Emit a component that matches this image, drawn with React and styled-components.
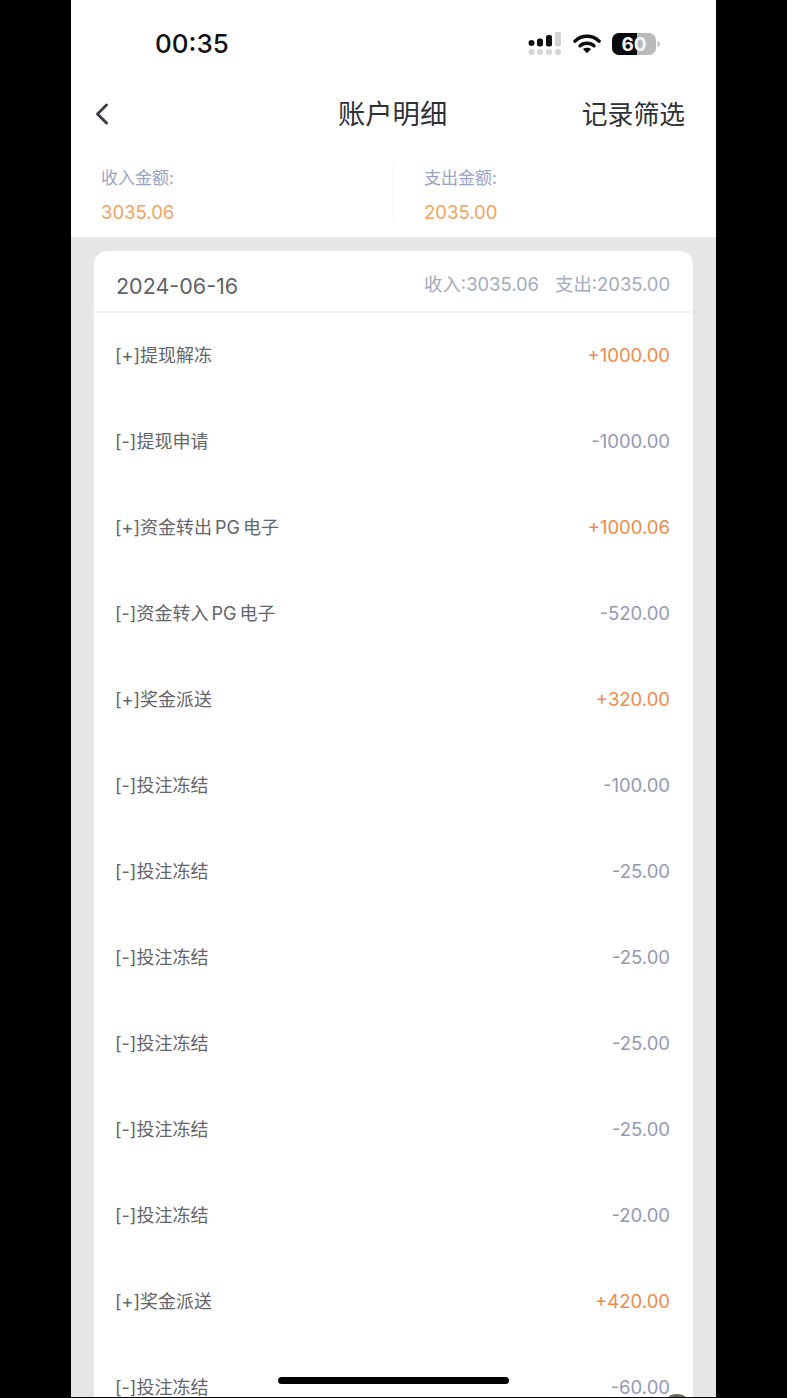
import React from "react";
import styled, { createGlobalStyle } from "styled-components";
import { ChevronLeft } from "lucide-react";

const GlobalStyle = createGlobalStyle`
    html, body {
        margin: 0;
        padding: 0;
        background: #000;
    }
    body {
        font-family: "Inter", "Noto Sans CJK SC", sans-serif;
    }
`;

const Stage = styled.div`
    width: 787px;
    height: 1398px;
    background: #000;
    overflow: hidden;
    display: flex;
    justify-content: flex-start;
    padding-left: 71px;
    box-sizing: border-box;
`;

const Phone = styled.div`
    position: relative;
    width: 645px;
    height: 1397px;
    background: #e6e6e6;
    overflow: hidden;
`;

const Top = styled.div`
    background: #fff;
    height: 237px;
    display: flex;
    flex-direction: column;
`;

const StatusBar = styled.div`
    height: 87px;
    display: flex;
    align-items: center;
    justify-content: space-between;
    padding: 0 56px 0 84px;
    box-sizing: border-box;
`;

const Clock = styled.div`
    font-size: 26px;
    font-weight: 500;
    color: #111;
`;

const StatusIcons = styled.div`
    display: flex;
    align-items: center;
    gap: 11px;
`;

const Nav = styled.div`
    height: 53px;
    display: flex;
    align-items: center;
    justify-content: space-between;
    padding: 0 31px 3px 13px;
    box-sizing: border-box;
    position: relative;
`;

const BackIcon = styled(ChevronLeft)`
    margin-top: 4px;
`;

const NavTitle = styled.div`
    position: absolute;
    left: 267px;
    font-size: 27.3px;
    color: #2f3136;
`;

const NavAction = styled.div`
    font-size: 25.8px;
    color: #2f3136;
`;

const Summary = styled.div`
    display: grid;
    grid-template-columns: 322px 1fr;
    margin-top: 22px;
    height: 60px;
`;

const SummaryCol = styled.div`
    display: flex;
    flex-direction: column;
    justify-content: space-between;
    padding-left: ${(p) => p.$inset}px;
    border-left: ${(p) => (p.$divided ? "1px solid #eceef0" : "none")};
`;

const SummaryLabel = styled.div`
    font-size: 17px;
    line-height: 30px;
    padding-top: 1px;
    color: #9aa3bf;
`;

const SummaryValue = styled.div`
    font-size: 18.5px;
    line-height: 24px;
    color: #f0a35e;
    margin-bottom: -2px;
`;

const Card = styled.div`
    margin: 14px 23px 0 23px;
    background: #fff;
    border-radius: 13px 13px 0 0;
`;

const CardHead = styled.div`
    height: 60px;
    border-bottom: 2px solid #f1f2f4;
    display: flex;
    align-items: center;
    justify-content: space-between;
    padding: 0 23px 0 22px;
`;

const DateText = styled.div`
    font-size: 21.5px;
    color: #5f6168;
    margin-top: 10px;
    line-height: 50px;
`;

const Totals = styled.div`
    display: flex;
    gap: 16px;
    font-size: 18.4px;
    color: #a3abc0;
    margin-top: 4px;
`;

const Row = styled.div`
    height: 86px;
    display: flex;
    align-items: center;
    justify-content: space-between;
    padding: 0 23px 0 21px;
`;

const RowName = styled.div`
    font-size: 18px;
    color: #63656b;
    margin-top: -4px;
    word-spacing: -2px;
`;

const Amount = styled.div`
    font-size: 18.5px;
    margin-top: -2px;
    color: ${(p) => (p.$plus ? "#f08a4b" : "#9499b3")};
`;

const HomeBar = styled.div`
    position: absolute;
    left: 207px;
    bottom: 13px;
    width: 231px;
    height: 7px;
    border-radius: 4px;
    background: #000;
`;

const CornerDot = styled.div`
    position: absolute;
    left: 597px;
    bottom: -6px;
    width: 18px;
    height: 9px;
    border-radius: 50%;
    background: #6f6a60;
`;

const SignalIcon = () => (
    <svg width="34" height="24" viewBox="0 0 34 24">
        <circle cx="3.5" cy="11" r="3" fill="#111" />
        <rect x="9" y="6.5" width="6" height="8" rx="2.5" fill="#111" />
        <rect x="18" y="3" width="6" height="11.5" rx="2" fill="#111" />
        <rect x="27" y="0" width="6" height="14.5" rx="1.5" fill="#d4d4d4" />
        <circle cx="3.5" cy="20" r="3" fill="#d4d4d4" />
        <circle cx="12" cy="20" r="3" fill="#d4d4d4" />
        <circle cx="21" cy="20" r="3" fill="#d4d4d4" />
        <circle cx="30" cy="20" r="3" fill="#d4d4d4" />
    </svg>
);

const WifiIcon = () => (
    <svg width="28" height="21" viewBox="0 0 30 22" fill="none">
        <path d="M2 8.5C9.5 1.5 20.5 1.5 28 8.5" stroke="#0c0c0c" strokeWidth="3.6" strokeLinecap="round" />
        <path d="M7.5 13.5C11.5 9.8 18.5 9.8 22.5 13.5" stroke="#0c0c0c" strokeWidth="3.6" strokeLinecap="round" />
        <path d="M15 21.5L10.6 17C13 15 17 15 19.4 17Z" fill="#0c0c0c" />
    </svg>
);

const BatteryIcon = () => (
    <svg width="48" height="24" viewBox="0 0 48 24">
        <rect x="0" y="1" width="44" height="22" rx="7" fill="#b9b9b9" />
        <path d="M7 1H25V23H7A7 7 0 0 1 0 16V8A7 7 0 0 1 7 1Z" fill="#0a0a0a" />
        <path d="M45.5 9V15C47 14.5 48 13.5 48 12S47 9.5 45.5 9Z" fill="#c4c4c4" />
        <text x="22" y="19" textAnchor="middle" fontFamily="Inter, sans-serif" fontSize="19" fontWeight="700" fill="#f4f4f4">60</text>
    </svg>
);

const rows = [
    { name: "[+]提现解冻", amount: "+1000.00" },
    { name: "[-]提现申请", amount: "-1000.00" },
    { name: "[+]资金转出 PG 电子", amount: "+1000.06" },
    { name: "[-]资金转入 PG 电子", amount: "-520.00" },
    { name: "[+]奖金派送", amount: "+320.00" },
    { name: "[-]投注冻结", amount: "-100.00" },
    { name: "[-]投注冻结", amount: "-25.00" },
    { name: "[-]投注冻结", amount: "-25.00" },
    { name: "[-]投注冻结", amount: "-25.00" },
    { name: "[-]投注冻结", amount: "-25.00" },
    { name: "[-]投注冻结", amount: "-20.00" },
    { name: "[+]奖金派送", amount: "+420.00" },
    { name: "[-]投注冻结", amount: "-60.00" },
];

export default function App() {
    return (
        <Stage>
            <GlobalStyle />
            <Phone>
                <Top>
                    <StatusBar>
                        <Clock>00:35</Clock>
                        <StatusIcons>
                            <SignalIcon />
                            <WifiIcon />
                            <BatteryIcon />
                        </StatusIcons>
                    </StatusBar>
                    <Nav>
                        <BackIcon size={36} color="#3c3f46" strokeWidth={2} />
                        <NavTitle>账户明细</NavTitle>
                        <NavAction>记录筛选</NavAction>
                    </Nav>
                    <Summary>
                        <SummaryCol $inset={30}>
                            <SummaryLabel>收入金额:</SummaryLabel>
                            <SummaryValue>3035.06</SummaryValue>
                        </SummaryCol>
                        <SummaryCol $inset={30} $divided>
                            <SummaryLabel>支出金额:</SummaryLabel>
                            <SummaryValue>2035.00</SummaryValue>
                        </SummaryCol>
                    </Summary>
                </Top>
                <Card>
                    <CardHead>
                        <DateText>2024-06-16</DateText>
                        <Totals>
                            <span>收入:3035.06</span>
                            <span>支出:2035.00</span>
                        </Totals>
                    </CardHead>
                    {rows.map((row, i) => (
                        <Row key={i}>
                            <RowName>{row.name}</RowName>
                            <Amount $plus={row.amount[0] === "+"}>{row.amount}</Amount>
                        </Row>
                    ))}
                </Card>
                <HomeBar />
                <CornerDot />
            </Phone>
        </Stage>
    );
}
